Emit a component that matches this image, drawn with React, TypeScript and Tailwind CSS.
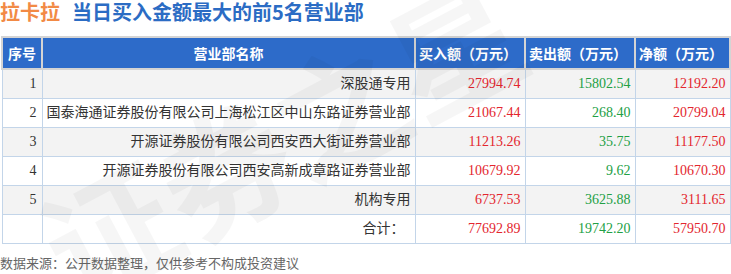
const ROWS = [
  { no: 1, name: "深股通专用", buy: "27994.74", sell: "15802.54", net: "12192.20" },
  { no: 2, name: "国泰海通证券股份有限公司上海松江区中山东路证券营业部", buy: "21067.44", sell: "268.40", net: "20799.04" },
  { no: 3, name: "开源证券股份有限公司西安西大街证券营业部", buy: "11213.26", sell: "35.75", net: "11177.50" },
  { no: 4, name: "开源证券股份有限公司西安高新成章路证券营业部", buy: "10679.92", sell: "9.62", net: "10670.30" },
  { no: 5, name: "机构专用", buy: "6737.53", sell: "3625.88", net: "3111.65" },
];

const CJK = "font-['Noto_Sans_CJK_SC','Microsoft_YaHei',sans-serif]";
const CELL = "font-['Liberation_Serif','Noto_Sans_CJK_SC',serif]";

export default function App() {
  return (
    <div className="relative w-[731px] h-[274px] bg-white overflow-hidden">
      {/* Title */}
      <div className={`${CJK} flex items-center h-[24px] text-[20px] font-bold leading-[24px] whitespace-nowrap`}>
        <span className="text-[#f28a45]">拉卡拉</span>
        <span className="ml-[12px] text-[#2b6cc4]">当日买入金额最大的前5名营业部</span>
      </div>

      {/* Table */}
      <table className="mt-[12px] ml-[1px] w-[728px] border-collapse table-fixed">
        <colgroup>
          <col className="w-[40px]" />
          <col className="w-[373px]" />
          <col className="w-[110px]" />
          <col className="w-[110px]" />
          <col className="w-[95px]" />
        </colgroup>
        <thead>
          <tr className={`${CJK} h-[32px] bg-[#2d6bc9] text-white text-[14px] font-bold`}>
            <th className="border-2 border-[#d4d4d4] font-bold">序号</th>
            <th className="border-2 border-[#d4d4d4] font-bold">营业部名称</th>
            <th className="border-2 border-[#d4d4d4] font-bold text-left pl-[3px]">买入额（万元）</th>
            <th className="border-2 border-[#d4d4d4] font-bold text-left pl-[3px]">卖出额（万元）</th>
            <th className="border-2 border-[#d4d4d4] font-bold text-left pl-[3px]">净额（万元）</th>
          </tr>
        </thead>
        <tbody className={`${CELL} text-[14px] text-[#333]`}>
          {ROWS.map((r) => (
            <tr key={r.no} className={`h-[29px] ${r.no % 2 === 1 ? "bg-[#f3f3f3]" : "bg-white"}`}>
              <td className="border border-[#c3d5e9] text-right pr-[5px]">{r.no}</td>
              <td className="border border-[#c3d5e9] text-right pr-[4px] whitespace-nowrap">{r.name}</td>
              <td className="border border-[#c3d5e9] text-right pr-[4px] text-[#e3262e]">{r.buy}</td>
              <td className="border border-[#c3d5e9] text-right pr-[4px] text-[#22a045]">{r.sell}</td>
              <td className="border border-[#c3d5e9] text-right pr-[4px] text-[#e3262e]">{r.net}</td>
            </tr>
          ))}
          <tr className="h-[29px] bg-white">
            <td className="border border-[#c3d5e9]" />
            <td className="border border-[#c3d5e9] text-right pr-[10px]">合计：</td>
            <td className="border border-[#c3d5e9] text-right pr-[4px] text-[#e3262e]">77692.89</td>
            <td className="border border-[#c3d5e9] text-right pr-[4px] text-[#22a045]">19742.20</td>
            <td className="border border-[#c3d5e9] text-right pr-[4px] text-[#e3262e]">57950.70</td>
          </tr>
        </tbody>
      </table>

      {/* Footer */}
      <div className={`${CJK} mt-[11px] text-[13px] leading-[16px] text-[#666]`}>
        数据来源：公开数据整理，仅供参考不构成投资建议
      </div>

      {/* Watermark */}
      <div
        aria-hidden="true"
        className={`${CJK} pointer-events-none select-none absolute left-[20px] top-[70px] -rotate-[28deg] whitespace-nowrap text-[130px] font-bold leading-none text-black/[0.035]`}
      >
        证券之星
      </div>
    </div>
  );
}
